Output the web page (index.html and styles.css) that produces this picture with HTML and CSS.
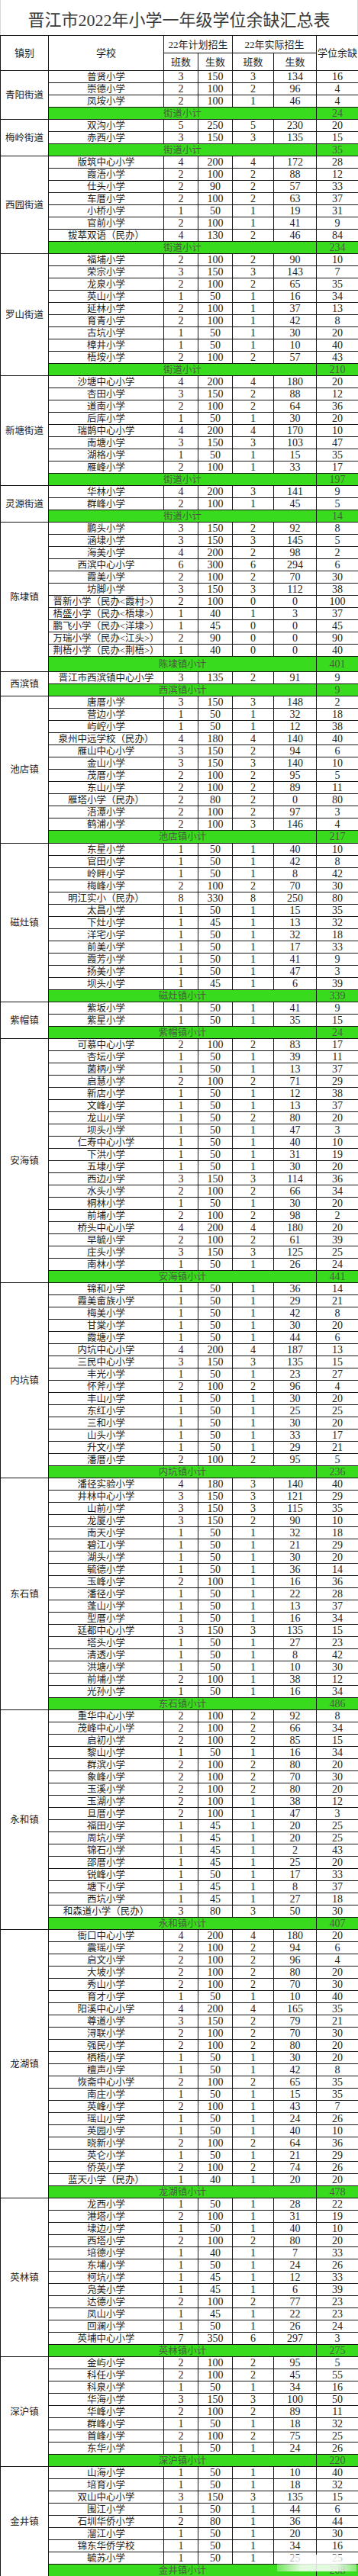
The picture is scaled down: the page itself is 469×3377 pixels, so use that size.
FILE: index.html
```html
<!DOCTYPE html>
<html lang="zh-CN">
<head>
<meta charset="utf-8">
<title>晋江市2022年小学一年级学位余缺汇总表</title>
<link rel="stylesheet" href="styles.css">
</head>
<body>
<div class="sheet">
<div class="title">晋江市2022年小学一年级学位余缺汇总表</div>
<table class="grid">
<colgroup><col class="c-town"><col class="c-name"><col class="c-a"><col class="c-b"><col class="c-c"><col class="c-d"><col class="c-e"></colgroup>
<thead>
<tr class="h1"><th rowspan="2">镇别</th><th rowspan="2">学校</th><th colspan="2">22年计划招生</th><th colspan="2">22年实际招生</th><th rowspan="2">学位余缺</th></tr>
<tr class="h2"><th>班数</th><th>生数</th><th>班数</th><th>生数</th></tr>
</thead>
<tbody>
<tr><td class="town" rowspan="4">青阳街道</td><td class="name">普贤小学</td><td>3</td><td>150</td><td>3</td><td>134</td><td>16</td></tr>
<tr><td class="name">崇德小学</td><td>2</td><td>100</td><td>2</td><td>96</td><td>4</td></tr>
<tr><td class="name">凤垵小学</td><td>2</td><td>100</td><td>1</td><td>46</td><td>4</td></tr>
<tr class="sub"><td colspan="5" class="sublabel">街道小计</td><td>24</td></tr>

<tr><td class="town" rowspan="3">梅岭街道</td><td class="name">双沟小学</td><td>5</td><td>250</td><td>5</td><td>230</td><td>20</td></tr>
<tr><td class="name">赤西小学</td><td>3</td><td>150</td><td>3</td><td>135</td><td>15</td></tr>
<tr class="sub"><td colspan="5" class="sublabel">街道小计</td><td>35</td></tr>

<tr><td class="town" rowspan="8">西园街道</td><td class="name">版筑中心小学</td><td>4</td><td>200</td><td>4</td><td>172</td><td>28</td></tr>
<tr><td class="name">霞浯小学</td><td>2</td><td>100</td><td>2</td><td>88</td><td>12</td></tr>
<tr><td class="name">仕头小学</td><td>2</td><td>90</td><td>2</td><td>57</td><td>33</td></tr>
<tr><td class="name">车厝小学</td><td>2</td><td>100</td><td>2</td><td>63</td><td>37</td></tr>
<tr><td class="name">小桥小学</td><td>1</td><td>50</td><td>1</td><td>19</td><td>31</td></tr>
<tr><td class="name">官前小学</td><td>2</td><td>100</td><td>1</td><td>41</td><td>9</td></tr>
<tr><td class="name">拔萃双语（民办）</td><td>4</td><td>130</td><td>2</td><td>46</td><td>84</td></tr>
<tr class="sub"><td colspan="5" class="sublabel">街道小计</td><td>234</td></tr>

<tr><td class="town" rowspan="10">罗山街道</td><td class="name">福埔小学</td><td>2</td><td>100</td><td>2</td><td>90</td><td>10</td></tr>
<tr><td class="name">荣宗小学</td><td>3</td><td>150</td><td>3</td><td>143</td><td>7</td></tr>
<tr><td class="name">龙泉小学</td><td>2</td><td>100</td><td>2</td><td>65</td><td>35</td></tr>
<tr><td class="name">英山小学</td><td>1</td><td>50</td><td>1</td><td>16</td><td>34</td></tr>
<tr><td class="name">延林小学</td><td>2</td><td>100</td><td>1</td><td>37</td><td>13</td></tr>
<tr><td class="name">育青小学</td><td>2</td><td>100</td><td>1</td><td>42</td><td>8</td></tr>
<tr><td class="name">古坑小学</td><td>1</td><td>50</td><td>1</td><td>30</td><td>20</td></tr>
<tr><td class="name">樟井小学</td><td>1</td><td>50</td><td>1</td><td>10</td><td>40</td></tr>
<tr><td class="name">梧垵小学</td><td>2</td><td>100</td><td>2</td><td>57</td><td>43</td></tr>
<tr class="sub"><td colspan="5" class="sublabel">街道小计</td><td>210</td></tr>

<tr><td class="town" rowspan="9">新塘街道</td><td class="name">沙塘中心小学</td><td>4</td><td>200</td><td>4</td><td>180</td><td>20</td></tr>
<tr><td class="name">杏田小学</td><td>3</td><td>150</td><td>2</td><td>88</td><td>12</td></tr>
<tr><td class="name">道南小学</td><td>2</td><td>100</td><td>2</td><td>64</td><td>36</td></tr>
<tr><td class="name">后库小学</td><td>1</td><td>50</td><td>1</td><td>30</td><td>20</td></tr>
<tr><td class="name">瑞鹊中心小学</td><td>4</td><td>200</td><td>4</td><td>170</td><td>10</td></tr>
<tr><td class="name">南塘小学</td><td>3</td><td>150</td><td>3</td><td>103</td><td>47</td></tr>
<tr><td class="name">湖格小学</td><td>1</td><td>50</td><td>1</td><td>15</td><td>35</td></tr>
<tr><td class="name">雁峰小学</td><td>2</td><td>100</td><td>1</td><td>33</td><td>17</td></tr>
<tr class="sub"><td colspan="5" class="sublabel">街道小计</td><td>197</td></tr>

<tr><td class="town" rowspan="3">灵源街道</td><td class="name">华林小学</td><td>4</td><td>200</td><td>3</td><td>141</td><td>9</td></tr>
<tr><td class="name">群峰小学</td><td>2</td><td>100</td><td>1</td><td>45</td><td>5</td></tr>
<tr class="sub"><td colspan="5" class="sublabel">街道小计</td><td>14</td></tr>

<tr><td class="town" rowspan="12">陈埭镇</td><td class="name">鹏头小学</td><td>3</td><td>150</td><td>2</td><td>92</td><td>8</td></tr>
<tr><td class="name">涵埭小学</td><td>3</td><td>150</td><td>3</td><td>145</td><td>5</td></tr>
<tr><td class="name">海美小学</td><td>4</td><td>200</td><td>2</td><td>98</td><td>2</td></tr>
<tr><td class="name">西滨中心小学</td><td>6</td><td>300</td><td>6</td><td>294</td><td>6</td></tr>
<tr><td class="name">霞美小学</td><td>2</td><td>100</td><td>2</td><td>70</td><td>30</td></tr>
<tr><td class="name">坊脚小学</td><td>3</td><td>150</td><td>3</td><td>112</td><td>38</td></tr>
<tr><td class="name">晋新小学（民办&lt;霞村&gt;）</td><td>2</td><td>100</td><td>0</td><td>0</td><td>100</td></tr>
<tr><td class="name">梧盛小学（民办&lt;梧埭&gt;）</td><td>1</td><td>40</td><td>1</td><td>3</td><td>37</td></tr>
<tr><td class="name">鹏飞小学（民办&lt;洋埭&gt;）</td><td>1</td><td>45</td><td>0</td><td>0</td><td>45</td></tr>
<tr><td class="name">万瑞小学（民办&lt;江头&gt;）</td><td>2</td><td>90</td><td>0</td><td>0</td><td>90</td></tr>
<tr><td class="name">荆梧小学（民办&lt;荆梧&gt;）</td><td>1</td><td>40</td><td>0</td><td>0</td><td>40</td></tr>
<tr class="sub tall"><td colspan="5" class="sublabel">陈埭镇小计</td><td>401</td></tr>

<tr><td class="town" rowspan="2">西滨镇</td><td class="name">晋江市西滨镇中心小学</td><td>3</td><td>135</td><td>2</td><td>91</td><td>9</td></tr>
<tr class="sub"><td colspan="5" class="sublabel">西滨镇小计</td><td>9</td></tr>

<tr><td class="town" rowspan="12">池店镇</td><td class="name">唐厝小学</td><td>3</td><td>150</td><td>3</td><td>148</td><td>2</td></tr>
<tr><td class="name">营边小学</td><td>1</td><td>50</td><td>1</td><td>32</td><td>18</td></tr>
<tr><td class="name">屿崆小学</td><td>1</td><td>50</td><td>1</td><td>12</td><td>38</td></tr>
<tr><td class="name">泉州中远学校（民办）</td><td>4</td><td>180</td><td>4</td><td>140</td><td>40</td></tr>
<tr><td class="name">雁山中心小学</td><td>3</td><td>150</td><td>2</td><td>94</td><td>6</td></tr>
<tr><td class="name">金山小学</td><td>3</td><td>150</td><td>3</td><td>140</td><td>10</td></tr>
<tr><td class="name">茂厝小学</td><td>2</td><td>100</td><td>2</td><td>95</td><td>5</td></tr>
<tr><td class="name">东山小学</td><td>2</td><td>100</td><td>2</td><td>89</td><td>11</td></tr>
<tr><td class="name">雁塔小学（民办）</td><td>2</td><td>80</td><td>2</td><td>0</td><td>80</td></tr>
<tr><td class="name">浯潭小学</td><td>2</td><td>100</td><td>2</td><td>97</td><td>3</td></tr>
<tr><td class="name">鹤浦小学</td><td>2</td><td>100</td><td>3</td><td>146</td><td>4</td></tr>
<tr class="sub mid"><td colspan="5" class="sublabel">池店镇小计</td><td>217</td></tr>

<tr><td class="town" rowspan="13">磁灶镇</td><td class="name">东星小学</td><td>1</td><td>50</td><td>1</td><td>40</td><td>10</td></tr>
<tr><td class="name">官田小学</td><td>1</td><td>50</td><td>1</td><td>42</td><td>8</td></tr>
<tr><td class="name">岭畔小学</td><td>1</td><td>50</td><td>1</td><td>8</td><td>42</td></tr>
<tr><td class="name">梅峰小学</td><td>2</td><td>100</td><td>2</td><td>70</td><td>30</td></tr>
<tr><td class="name">明江实小（民办）</td><td>8</td><td>330</td><td>8</td><td>250</td><td>80</td></tr>
<tr><td class="name">太昌小学</td><td>1</td><td>50</td><td>1</td><td>15</td><td>35</td></tr>
<tr><td class="name">下灶小学</td><td>1</td><td>45</td><td>1</td><td>13</td><td>32</td></tr>
<tr><td class="name">洋宅小学</td><td>1</td><td>50</td><td>1</td><td>32</td><td>18</td></tr>
<tr><td class="name">前美小学</td><td>1</td><td>50</td><td>1</td><td>17</td><td>33</td></tr>
<tr><td class="name">霞芳小学</td><td>1</td><td>50</td><td>1</td><td>41</td><td>9</td></tr>
<tr><td class="name">扬美小学</td><td>1</td><td>50</td><td>1</td><td>47</td><td>3</td></tr>
<tr><td class="name">坝头小学</td><td>1</td><td>45</td><td>1</td><td>6</td><td>39</td></tr>
<tr class="sub"><td colspan="5" class="sublabel">磁灶镇小计</td><td>339</td></tr>

<tr><td class="town" rowspan="3">紫帽镇</td><td class="name">紫坂小学</td><td>1</td><td>50</td><td>1</td><td>41</td><td>9</td></tr>
<tr><td class="name">紫星小学</td><td>1</td><td>50</td><td>1</td><td>35</td><td>15</td></tr>
<tr class="sub"><td colspan="5" class="sublabel">紫帽镇小计</td><td>24</td></tr>

<tr><td class="town" rowspan="20">安海镇</td><td class="name">可慕中心小学</td><td>2</td><td>100</td><td>2</td><td>83</td><td>17</td></tr>
<tr><td class="name">杏坛小学</td><td>1</td><td>50</td><td>1</td><td>39</td><td>11</td></tr>
<tr><td class="name">菌柄小学</td><td>1</td><td>50</td><td>1</td><td>13</td><td>37</td></tr>
<tr><td class="name">启慧小学</td><td>2</td><td>100</td><td>2</td><td>71</td><td>29</td></tr>
<tr><td class="name">新店小学</td><td>1</td><td>50</td><td>1</td><td>12</td><td>38</td></tr>
<tr><td class="name">文峰小学</td><td>1</td><td>50</td><td>1</td><td>13</td><td>37</td></tr>
<tr><td class="name">龙山小学</td><td>1</td><td>50</td><td>2</td><td>80</td><td>20</td></tr>
<tr><td class="name">坝头小学</td><td>1</td><td>50</td><td>1</td><td>47</td><td>3</td></tr>
<tr><td class="name">仁寿中心小学</td><td>1</td><td>50</td><td>1</td><td>40</td><td>10</td></tr>
<tr><td class="name">下洪小学</td><td>1</td><td>50</td><td>1</td><td>31</td><td>19</td></tr>
<tr><td class="name">五埭小学</td><td>1</td><td>50</td><td>1</td><td>30</td><td>20</td></tr>
<tr><td class="name">西边小学</td><td>3</td><td>150</td><td>3</td><td>114</td><td>36</td></tr>
<tr><td class="name">水头小学</td><td>2</td><td>100</td><td>2</td><td>66</td><td>34</td></tr>
<tr><td class="name">桐林小学</td><td>1</td><td>50</td><td>1</td><td>30</td><td>20</td></tr>
<tr><td class="name">前埔小学</td><td>2</td><td>100</td><td>2</td><td>98</td><td>2</td></tr>
<tr><td class="name">桥头中心小学</td><td>4</td><td>200</td><td>4</td><td>180</td><td>20</td></tr>
<tr><td class="name">早毓小学</td><td>2</td><td>100</td><td>2</td><td>61</td><td>39</td></tr>
<tr><td class="name">庄头小学</td><td>3</td><td>150</td><td>3</td><td>125</td><td>25</td></tr>
<tr><td class="name">南林小学</td><td>1</td><td>50</td><td>1</td><td>26</td><td>24</td></tr>
<tr class="sub"><td colspan="5" class="sublabel">安海镇小计</td><td>441</td></tr>

<tr><td class="town" rowspan="16">内坑镇</td><td class="name">锦和小学</td><td>1</td><td>50</td><td>1</td><td>36</td><td>14</td></tr>
<tr><td class="name">霞美畲族小学</td><td>1</td><td>50</td><td>1</td><td>29</td><td>21</td></tr>
<tr><td class="name">梅美小学</td><td>1</td><td>50</td><td>1</td><td>42</td><td>8</td></tr>
<tr><td class="name">甘棠小学</td><td>1</td><td>50</td><td>1</td><td>30</td><td>20</td></tr>
<tr><td class="name">霞塘小学</td><td>1</td><td>50</td><td>1</td><td>44</td><td>6</td></tr>
<tr><td class="name">内坑中心小学</td><td>4</td><td>200</td><td>4</td><td>187</td><td>13</td></tr>
<tr><td class="name">三民中心小学</td><td>3</td><td>150</td><td>3</td><td>135</td><td>15</td></tr>
<tr><td class="name">丰光小学</td><td>1</td><td>50</td><td>1</td><td>23</td><td>27</td></tr>
<tr><td class="name">怀斧小学</td><td>2</td><td>100</td><td>2</td><td>96</td><td>4</td></tr>
<tr><td class="name">丰山小学</td><td>1</td><td>50</td><td>1</td><td>30</td><td>20</td></tr>
<tr><td class="name">东红小学</td><td>1</td><td>50</td><td>1</td><td>25</td><td>25</td></tr>
<tr><td class="name">三和小学</td><td>1</td><td>50</td><td>1</td><td>30</td><td>20</td></tr>
<tr><td class="name">山头小学</td><td>1</td><td>50</td><td>1</td><td>33</td><td>17</td></tr>
<tr><td class="name">升文小学</td><td>1</td><td>50</td><td>1</td><td>29</td><td>21</td></tr>
<tr><td class="name">潘厝小学</td><td>2</td><td>100</td><td>2</td><td>95</td><td>5</td></tr>
<tr class="sub"><td colspan="5" class="sublabel">内坑镇小计</td><td>236</td></tr>

<tr><td class="town" rowspan="19">东石镇</td><td class="name">潘径实验小学</td><td>4</td><td>180</td><td>3</td><td>140</td><td>40</td></tr>
<tr><td class="name">井林中心小学</td><td>3</td><td>150</td><td>3</td><td>121</td><td>29</td></tr>
<tr><td class="name">山前小学</td><td>3</td><td>150</td><td>3</td><td>115</td><td>35</td></tr>
<tr><td class="name">龙厦小学</td><td>3</td><td>150</td><td>2</td><td>90</td><td>10</td></tr>
<tr><td class="name">南天小学</td><td>1</td><td>50</td><td>1</td><td>32</td><td>18</td></tr>
<tr><td class="name">碧江小学</td><td>1</td><td>50</td><td>1</td><td>21</td><td>29</td></tr>
<tr><td class="name">湖头小学</td><td>1</td><td>50</td><td>1</td><td>30</td><td>20</td></tr>
<tr><td class="name">毓德小学</td><td>1</td><td>50</td><td>1</td><td>36</td><td>14</td></tr>
<tr><td class="name">玉峰小学</td><td>2</td><td>100</td><td>1</td><td>16</td><td>36</td></tr>
<tr><td class="name">潘径小学</td><td>1</td><td>50</td><td>1</td><td>22</td><td>28</td></tr>
<tr><td class="name">蓬山小学</td><td>1</td><td>50</td><td>1</td><td>13</td><td>37</td></tr>
<tr><td class="name">型厝小学</td><td>1</td><td>50</td><td>1</td><td>16</td><td>34</td></tr>
<tr><td class="name">廷都中心小学</td><td>3</td><td>150</td><td>3</td><td>135</td><td>15</td></tr>
<tr><td class="name">塔头小学</td><td>1</td><td>50</td><td>1</td><td>27</td><td>23</td></tr>
<tr><td class="name">清透小学</td><td>1</td><td>50</td><td>1</td><td>8</td><td>42</td></tr>
<tr><td class="name">洪塘小学</td><td>1</td><td>50</td><td>1</td><td>10</td><td>30</td></tr>
<tr><td class="name">前埔小学</td><td>2</td><td>100</td><td>1</td><td>38</td><td>12</td></tr>
<tr><td class="name">光孙小学</td><td>1</td><td>50</td><td>1</td><td>16</td><td>34</td></tr>
<tr class="sub"><td colspan="5" class="sublabel">东石镇小计</td><td>486</td></tr>

<tr><td class="town" rowspan="18">永和镇</td><td class="name">重华中心小学</td><td>2</td><td>100</td><td>2</td><td>92</td><td>8</td></tr>
<tr><td class="name">茂峰中心小学</td><td>2</td><td>100</td><td>2</td><td>66</td><td>34</td></tr>
<tr><td class="name">启初小学</td><td>2</td><td>100</td><td>2</td><td>85</td><td>15</td></tr>
<tr><td class="name">黎山小学</td><td>1</td><td>50</td><td>1</td><td>16</td><td>34</td></tr>
<tr><td class="name">群滨小学</td><td>2</td><td>100</td><td>2</td><td>80</td><td>20</td></tr>
<tr><td class="name">象峰小学</td><td>2</td><td>100</td><td>2</td><td>70</td><td>30</td></tr>
<tr><td class="name">玉溪小学</td><td>2</td><td>100</td><td>2</td><td>80</td><td>20</td></tr>
<tr><td class="name">玉湖小学</td><td>2</td><td>100</td><td>1</td><td>38</td><td>12</td></tr>
<tr><td class="name">旦厝小学</td><td>2</td><td>100</td><td>1</td><td>47</td><td>3</td></tr>
<tr><td class="name">福田小学</td><td>1</td><td>45</td><td>1</td><td>20</td><td>25</td></tr>
<tr><td class="name">周坑小学</td><td>1</td><td>45</td><td>1</td><td>20</td><td>25</td></tr>
<tr><td class="name">锦石小学</td><td>1</td><td>45</td><td>1</td><td>2</td><td>43</td></tr>
<tr><td class="name">邵厝小学</td><td>1</td><td>45</td><td>1</td><td>25</td><td>20</td></tr>
<tr><td class="name">锐峰小学</td><td>1</td><td>50</td><td>1</td><td>17</td><td>33</td></tr>
<tr><td class="name">塘下小学</td><td>1</td><td>45</td><td>1</td><td>8</td><td>37</td></tr>
<tr><td class="name">西坑小学</td><td>1</td><td>45</td><td>1</td><td>27</td><td>18</td></tr>
<tr><td class="name">和森道小学（民办）</td><td>3</td><td>80</td><td>3</td><td>50</td><td>30</td></tr>
<tr class="sub"><td colspan="5" class="sublabel">永和镇小计</td><td>407</td></tr>

<tr><td class="town" rowspan="22">龙湖镇</td><td class="name">衙口中心小学</td><td>4</td><td>200</td><td>4</td><td>180</td><td>20</td></tr>
<tr><td class="name">震瑶小学</td><td>2</td><td>100</td><td>2</td><td>94</td><td>6</td></tr>
<tr><td class="name">启文小学</td><td>2</td><td>100</td><td>2</td><td>96</td><td>4</td></tr>
<tr><td class="name">大坡小学</td><td>2</td><td>100</td><td>2</td><td>80</td><td>20</td></tr>
<tr><td class="name">秀山小学</td><td>2</td><td>100</td><td>2</td><td>70</td><td>30</td></tr>
<tr><td class="name">育才小学</td><td>1</td><td>50</td><td>1</td><td>10</td><td>40</td></tr>
<tr><td class="name">阳溪中心小学</td><td>4</td><td>200</td><td>4</td><td>165</td><td>35</td></tr>
<tr><td class="name">尊道小学</td><td>3</td><td>150</td><td>2</td><td>79</td><td>21</td></tr>
<tr><td class="name">浔联小学</td><td>2</td><td>100</td><td>2</td><td>70</td><td>30</td></tr>
<tr><td class="name">强民小学</td><td>2</td><td>100</td><td>2</td><td>80</td><td>20</td></tr>
<tr><td class="name">栖梧小学</td><td>1</td><td>50</td><td>1</td><td>30</td><td>20</td></tr>
<tr><td class="name">檀声小学</td><td>1</td><td>50</td><td>1</td><td>42</td><td>8</td></tr>
<tr><td class="name">恢斋中心小学</td><td>2</td><td>100</td><td>2</td><td>65</td><td>35</td></tr>
<tr><td class="name">南庄小学</td><td>1</td><td>50</td><td>1</td><td>15</td><td>35</td></tr>
<tr><td class="name">英峰小学</td><td>2</td><td>100</td><td>1</td><td>43</td><td>7</td></tr>
<tr><td class="name">瑶山小学</td><td>1</td><td>50</td><td>1</td><td>24</td><td>26</td></tr>
<tr><td class="name">英园小学</td><td>1</td><td>50</td><td>1</td><td>40</td><td>10</td></tr>
<tr><td class="name">晓新小学</td><td>2</td><td>100</td><td>2</td><td>64</td><td>36</td></tr>
<tr><td class="name">英仑小学</td><td>1</td><td>50</td><td>1</td><td>21</td><td>29</td></tr>
<tr><td class="name">侨英小学</td><td>2</td><td>100</td><td>2</td><td>74</td><td>26</td></tr>
<tr><td class="name">蓝天小学（民办）</td><td>1</td><td>40</td><td>1</td><td>20</td><td>20</td></tr>
<tr class="sub"><td colspan="5" class="sublabel">龙湖镇小计</td><td>478</td></tr>

<tr><td class="town" rowspan="13">英林镇</td><td class="name">龙西小学</td><td>1</td><td>50</td><td>1</td><td>28</td><td>22</td></tr>
<tr><td class="name">港塔小学</td><td>2</td><td>100</td><td>1</td><td>31</td><td>19</td></tr>
<tr><td class="name">埭边小学</td><td>1</td><td>50</td><td>1</td><td>40</td><td>10</td></tr>
<tr><td class="name">西塔小学</td><td>2</td><td>100</td><td>2</td><td>80</td><td>20</td></tr>
<tr><td class="name">培德小学</td><td>1</td><td>40</td><td>1</td><td>7</td><td>33</td></tr>
<tr><td class="name">东埔小学</td><td>1</td><td>50</td><td>1</td><td>24</td><td>26</td></tr>
<tr><td class="name">柯坑小学</td><td>1</td><td>45</td><td>1</td><td>12</td><td>33</td></tr>
<tr><td class="name">凫美小学</td><td>1</td><td>45</td><td>1</td><td>6</td><td>39</td></tr>
<tr><td class="name">达德小学</td><td>2</td><td>100</td><td>2</td><td>77</td><td>23</td></tr>
<tr><td class="name">凤山小学</td><td>1</td><td>45</td><td>1</td><td>22</td><td>23</td></tr>
<tr><td class="name">回澜小学</td><td>1</td><td>50</td><td>1</td><td>26</td><td>24</td></tr>
<tr><td class="name">英埔中心小学</td><td>7</td><td>350</td><td>6</td><td>297</td><td>3</td></tr>
<tr class="sub"><td colspan="5" class="sublabel">英林镇小计</td><td>275</td></tr>

<tr><td class="town" rowspan="9">深沪镇</td><td class="name">金屿小学</td><td>2</td><td>100</td><td>2</td><td>95</td><td>5</td></tr>
<tr><td class="name">科任小学</td><td>2</td><td>100</td><td>2</td><td>45</td><td>55</td></tr>
<tr><td class="name">科泉小学</td><td>1</td><td>50</td><td>1</td><td>34</td><td>16</td></tr>
<tr><td class="name">华海小学</td><td>3</td><td>150</td><td>3</td><td>100</td><td>50</td></tr>
<tr><td class="name">华峰小学</td><td>2</td><td>100</td><td>2</td><td>89</td><td>11</td></tr>
<tr><td class="name">群峰小学</td><td>1</td><td>50</td><td>1</td><td>18</td><td>32</td></tr>
<tr><td class="name">首峰小学</td><td>2</td><td>100</td><td>2</td><td>75</td><td>25</td></tr>
<tr><td class="name">东华小学</td><td>1</td><td>50</td><td>1</td><td>24</td><td>26</td></tr>
<tr class="sub"><td colspan="5" class="sublabel">深沪镇小计</td><td>220</td></tr>

<tr><td class="town" rowspan="9">金井镇</td><td class="name">山海小学</td><td>1</td><td>50</td><td>1</td><td>10</td><td>40</td></tr>
<tr><td class="name">培育小学</td><td>1</td><td>50</td><td>1</td><td>18</td><td>32</td></tr>
<tr><td class="name">双山中心小学</td><td>3</td><td>150</td><td>3</td><td>135</td><td>15</td></tr>
<tr><td class="name">围江小学</td><td>1</td><td>50</td><td>1</td><td>44</td><td>6</td></tr>
<tr><td class="name">石圳华侨小学</td><td>2</td><td>80</td><td>1</td><td>36</td><td>44</td></tr>
<tr><td class="name">溜江小学</td><td>1</td><td>50</td><td>1</td><td>20</td><td>30</td></tr>
<tr><td class="name">锦东华侨学校</td><td>1</td><td>50</td><td>1</td><td>34</td><td>16</td></tr>
<tr><td class="name">毓苏小学</td><td>1</td><td>50</td><td>1</td><td>25</td><td>25</td></tr>
<tr class="sub"><td colspan="5" class="sublabel">金井镇小计</td><td>208</td></tr>
</tbody>
</table>
<div class="watermark"></div>
</div>
</body>
</html>
```

FILE: styles.css
```css
html, body {
  margin: 0;
  padding: 0;
  background: #ffffff;
}

.sheet {
  position: relative;
  width: 469px;
}

.title {
  height: 46px;
  box-sizing: border-box;
  display: flex;
  align-items: center;
  justify-content: center;
  padding-top: 2px;
  border-left: 1px solid #d8d8d8;
  border-right: 1px solid #d8d8d8;
  font-family: "Liberation Serif", "Noto Sans CJK SC", serif;
  font-size: 22px;
  color: #3a3a3a;
  letter-spacing: 0;
}

.grid {
  border-collapse: collapse;
  table-layout: fixed;
  width: 469px;
  font-family: "Liberation Serif", "Noto Sans CJK SC", serif;
  color: #1e1e1e;
}

.c-town { width: 63px; }
.c-name { width: 151px; }
.c-a { width: 45px; }
.c-b { width: 45px; }
.c-c { width: 54px; }
.c-d { width: 56px; }
.c-e { width: 55px; }

.grid th,
.grid td {
  border: 1px solid #161616;
  padding: 0;
  text-align: center;
  vertical-align: middle;
  white-space: nowrap;
  overflow: hidden;
}

.grid th {
  font-weight: normal;
  font-size: 13px;
  line-height: 15px;
}

.h1, .h2 { height: 23px; }

.grid td {
  font-size: 14px;
  line-height: 14px;
}

.grid tbody tr { height: 16px; }

.grid td.name,
.grid td.town,
.grid td.sublabel {
  font-size: 12.5px;
}

.sub td {
  background: #38dc1c;
  color: #4a5a40;
}

.sub.tall { height: 20px; }
.sub.mid { height: 17px; }

.grid td.town {
  background: #ffffff;
  color: #1e1e1e;
}

.watermark {
  position: absolute;
  left: 363px;
  top: 3349px;
  width: 104px;
  height: 22px;
  background: linear-gradient(90deg, rgba(255,255,255,0.3), rgba(255,255,255,0.85) 30%, rgba(255,255,255,0.85) 75%, rgba(255,255,255,0.4));
  pointer-events: none;
}
```
